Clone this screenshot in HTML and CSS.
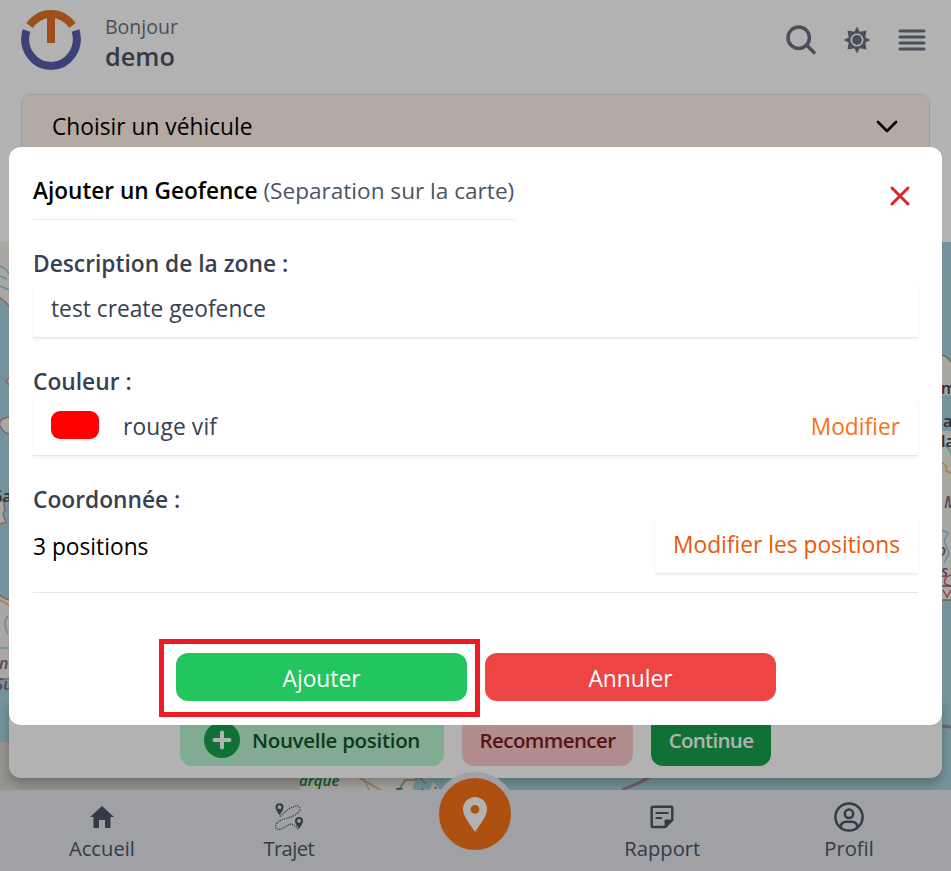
FILE: index.html
```html
<!DOCTYPE html>
<html lang="fr">
<head>
<meta charset="utf-8">
<title>Geofence</title>
<link rel="stylesheet" href="styles.css">
</head>
<body>
<div class="app">
  <header class="top">
    <svg class="logo" viewBox="0 0 60 60"><g fill="none" stroke-width="8"><path d="M8.500 15.500Q17 4 30 4T51.500 15.500" stroke="#e47224"/><path d="M5.500 20.500C0 39 13 56 30 56S60 39 54.500 20.500" stroke="#585da8"/></g><path d="M26 4h8v29h-8z" fill="#e47224"/></svg>
    <div class="hello"><span class="hi">Bonjour</span><span class="user">demo</span></div>
    <div class="tools">
      <svg width="32" height="32" viewBox="0 0 32 32" fill="none" stroke="#6b7280" stroke-width="3.500" stroke-linecap="round"><circle cx="12.700" cy="13.700" r="10.700"/><path d="M20.500 21l7.500 7.500"/></svg>
      <svg width="28" height="28" viewBox="0 0 28 28" fill="#6b7280"><path d="M14 .5l2.600 5.200 6.900-1.200-1.200 6.900L27.500 14l-5.200 2.600 1.200 6.900-6.900-1.200L14 27.500l-2.600-5.200-6.900 1.200 1.200-6.900L.5 14l5.200-2.600-1.200-6.900 6.900 1.200z"/><circle cx="14" cy="14" r="5.700" stroke="#fff" stroke-width="1.600"/></svg>
      <svg width="28" height="28" viewBox="0 0 28 28" stroke="#6b7280" stroke-width="3" stroke-linecap="round"><path d="M2 4.900h24M2 10.900h24M2 16.900h24M2 22.900h24"/></svg>
    </div>
  </header>
  <div class="select"><span>Choisir un véhicule</span><svg width="24" height="14" viewBox="0 0 24 14" fill="none" stroke="#000" stroke-width="2.600" stroke-linecap="round" stroke-linejoin="round"><path d="M3 2l9 9 9-9"/></svg></div>
  <main class="map">
    <svg class="tiles" width="951" height="548" viewBox="0 242 951 548">
      <path fill="#aad3df" d="M0 242h951v548H0z"/>
      <path fill="#f2efe9" d="M0 242h9v64l-9-9z"/><path fill="#d9d6d1" d="M0 742h300v48H0z"/><path fill="#f2efe9" d="M300 778h130l10 12H300z"/>
      <g fill="#f2efe9" stroke="#ad91ad" stroke-width="1.500"><path d="M-2 297q6 2 12 11M10 377l-4 4 4 5M10 417q-12 1-10 9 4 8 10 8M-2 498l5 2 2 10-2 4 3 8-8 3M-2 594l6 4 8 3v77l-14 2z"/><path d="M941 355q5 0 11 8v237h-11z" stroke="#8b9a72"/></g>
      <path fill="#aad3df" d="M942 395h9v36h-9z"/>
      <g fill="none" stroke-width="1.500"><path d="M0 266q6 2 9 8M0 276l7 3M0 286l9 4M8 616q-6 6 0 18M0 648h9M943 444q8 4 8 12M942 530l6 3-4 8 5 12-5 10" stroke="#8ccbe0"/><path d="M0 600l9 5M942 463q6 2 4 8l5 2" stroke="#f5b55c"/><path d="M951 575q-8 2-6 9l6 2M943 590l4 7 4-7" stroke="#e05575"/><path d="M942 586h9" stroke="#6b6b6b"/></g>
      <path d="M942 726l9 1M622 790q16-6 30-14" fill="none" stroke="#a58ba8" stroke-width="3"/>
      <path d="M358 777l24 14" stroke="#efb47a" fill="none" stroke-width="2"/><path d="M363 777l6 13" stroke="#8fbf8f" fill="none"/>
      <path d="M430 790l4-12h-18l-4 12z" fill="#aad3df"/><path d="M400 788l5-8h9l5-3 7 7" fill="none" stroke="#b39683" stroke-width="1.500"/>
      <g class="maptext"><text x="-9" y="502">Ga</text><text x="941" y="394">m</text><text x="943" y="427">a</text><text x="941" y="447">la</text></g>
      <g class="maptext place"><text x="-1" y="669">n</text><text x="-5" y="690">Su</text><text x="944" y="508">M</text><text x="937" y="556">o</text><text x="941" y="577">s</text></g>
      <g class="maptext park"><text x="299" y="786">arque</text><text x="394" y="798">Fontvie</text></g>
    </svg>
    <section class="panel"><span class="pill add"><svg width="36" height="36" viewBox="0 0 36 36"><circle cx="18" cy="18" r="18" fill="#16a34a"/><path d="M18 10.500v15M10.500 18h15" stroke="#fff" stroke-width="4" stroke-linecap="round"/></svg>Nouvelle position</span><span class="pill reset">Recommencer</span><span class="pill next">Continue</span></section>
  </main>
  <nav class="nav">
    <a><svg width="30" height="30" viewBox="0 0 30 30" fill="#4b5563"><path d="M15 4L3 15h3.500v11H12v-8h6v8h5.500V15H27z"/></svg><span>Accueil</span></a>
    <a><svg width="30" height="30" viewBox="0 0 30 30" fill="#4b5563"><path fill-rule="evenodd" d="M5.500 1.300a4 4 0 0 1 4 4q0 2.700-4 7.700-4-5-4-7.700a4 4 0 0 1 4-4zm0 2a1.900 1.900 0 1 0 0 3.800 1.900 1.900 0 1 0 0-3.800zM25 15a4 4 0 0 1 4 4q0 2.700-4 7.700-4-5-4-7.700a4 4 0 0 1 4-4zm0 2a1.900 1.900 0 1 0 0 3.800 1.900 1.900 0 1 0 0-3.800z"/><path fill="none" stroke="#4b5563" stroke-width="1.200" stroke-dasharray="1.300 1" d="M6 14.500C12 9 18 3.500 24 4c5 3 0 8-6 10.500S2 18 1.500 24.500c1 6 9 1 12-1s5-2 8 1l3 3.500"/></svg><span class="trajet">Trajet</span></a>
    <a class="home"><span class="orb"><svg width="24" height="35" viewBox="0 0 24 35"><path fill="#fff" fill-rule="evenodd" d="M12 0a12 12 0 0 1 12 12c0 7-6 14-12 23C6 26 0 19 0 12A12 12 0 0 1 12 0zm0 8a4.400 4.400 0 1 0 0 8.800A4.400 4.400 0 0 0 12 8z"/></svg></span></a>
    <a><svg width="30" height="30" viewBox="0 0 30 30" fill="none" stroke="#4b5563" stroke-width="2.400"><path d="M5.500 4.800h19a.8.8 0 0 1 .8.8V18l-7 7H5.500a.8.8 0 0 1-.8-.8V5.600a.8.8 0 0 1 .8-.8z"/><path d="M8.500 11h13M8.500 16h6.500" stroke-width="2.200"/><path d="M18 25v-7h7z" fill="#4b5563" stroke-width="1"/></svg><span>Rapport</span></a>
    <a><svg width="30" height="30" viewBox="0 0 30 30" fill="none" stroke="#4b5563" stroke-width="2.500"><circle cx="15" cy="15" r="13.600"/><circle cx="15" cy="11.800" r="4.200"/><path d="M6.300 25q1.200-5.300 6-5.300h5.400q4.800 0 6 5.300"/></svg><span>Profil</span></a>
  </nav>
</div>
<div class="overlay">
  <section class="modal">
    <div class="head"><h2><b>Ajouter un Geofence</b> <span class="sub">(Separation sur la carte)</span></h2><svg class="close" width="20" height="20" viewBox="0 0 20 20" stroke="#dc2626" stroke-width="3" stroke-linecap="round"><path d="M2 2l16 16M18 2L2 18"/></svg></div>
    <div class="field"><h3>Description de la zone :</h3><div class="row"><span>test create geofence</span></div></div>
    <div class="field"><h3>Couleur :</h3><div class="row"><i class="swatch"></i><span class="colour">rouge vif</span><span class="edit">Modifier</span></div></div>
    <div class="field last"><h3>Coordonnée :</h3><div class="coords"><span class="count">3 positions</span><div class="row"><span>Modifier les positions</span></div></div></div>
    <div class="actions"><div class="mark"><button class="btn ok">Ajouter</button></div><button class="btn no">Annuler</button></div>
  </section>
</div>
</body>
</html>
```
FILE: styles.css
```css
* { box-sizing: border-box; }
body { margin: 0; width: 951px; height: 871px; overflow: hidden; font: 22.75px/36px "Open Sans", "Noto Sans", sans-serif; color: #000; background: #fff; }
.app { height: 871px; display: flex; flex-direction: column; }
.top { height: 94px; display: flex; align-items: flex-start; padding: 10px 25px 0 21px; }
.logo { width: 60px; height: 60px; }
.hello { display: flex; flex-direction: column; margin-left: 24px; }
.hi { font-size: 19.5px; line-height: 30px; margin-top: 2px; color: #6b7280; }
.user { font-size: 25.3px; line-height: 28px; font-weight: 600; color: #4b5563; }
.tools { margin-left: auto; display: flex; align-items: center; height: 60px; }
.tools svg:nth-child(1) { margin-right: 24.5px; }
.tools svg:nth-child(2) { margin-right: 27.5px; }
.select { flex: none; height: 66px; margin: 0 21px; padding: 0 30px; border: 1px solid #e2e4e8; border-radius: 9px; background: #fff4ea; display: flex; align-items: center; justify-content: space-between; }
.map { margin-top: 82px; height: 548px; flex: none; display: grid; }
.tiles { grid-area: 1 / 1; }
.maptext { font: 600 16px "Open Sans", sans-serif; fill: #444; }
.place { font-style: italic; fill: #86628b; }
.park { font-size: 15px; font-style: italic; fill: #218533; }
.panel { grid-area: 1 / 1; align-self: end; margin: 0 9px 12px; height: 80px; border-radius: 0 0 12px 12px; background: #fff; box-shadow: 0 6px 12px rgba(0,0,0,.25); display: flex; justify-content: center; align-items: flex-end; gap: 18px; padding-bottom: 12px; }
.pill { height: 52px; border-radius: 12px; display: flex; align-items: center; justify-content: center; font-weight: 600; font-size: 20.5px; letter-spacing: -0.3px; white-space: nowrap; }
.add { width: 264px; gap: 12px; background: #bbf7d0; color: #14532d; }
.reset { width: 171px; background: #fecaca; color: #7f1d1d; letter-spacing: -0.6px; }
.next { width: 120px; background: #16a34a; color: #fff; letter-spacing: -0.7px; }
.nav { flex: none; height: 81px; padding: 0 8.5px; background: #e5e7eb; display: grid; grid-template-columns: repeat(5, 1fr); }
.nav a { display: flex; flex-direction: column; align-items: center; padding-top: 12px; font-size: 20.2px; line-height: 33px; color: #4b5563; }
.nav .trajet { letter-spacing: -0.6px; }
.nav .home { padding: 0; }
.orb { width: 84px; height: 84px; margin-top: -18px; border: 6px solid #e5e7eb; border-radius: 50%; background: #f97316; display: flex; align-items: center; justify-content: center; position: relative; }
.overlay { position: fixed; inset: 0; background: rgba(0,0,0,.3); padding: 147px 9px 0; }
.modal { height: 578px; border-radius: 12px; background: #fff; padding: 24px 24px 0; }
.head { display: flex; justify-content: space-between; align-items: flex-start; }
h2 { font-size: 22.6px; font-weight: 400; margin: 0; height: 49px; width: 482px; line-height: 40px; border-bottom: 1px solid #e5e7eb; white-space: nowrap; }
h2 b, h3 { font-weight: 600; }
.sub { color: #4b5563; }
.close { margin: 15px 8px 0 0; }
.field { margin-top: 24px; }
h3 { margin: 0; font-size: 22.75px; line-height: 40px; height: 36px; color: #374151; }
.row { height: 58px; padding: 0 18px; display: flex; align-items: center; border-bottom: 1px solid #e5e7eb; box-shadow: 0 1.5px 3px rgba(0,0,0,.06); color: #374151; white-space: nowrap; }
.swatch { width: 48px; height: 28px; border-radius: 9px; background: red; margin: -4px 24px 0 0; }
.colour { letter-spacing: 0.15px; }
.edit { margin-left: auto; color: #f97316; }
.coords { display: flex; justify-content: space-between; align-items: center; }
.coords .row { color: #ea580c; width: 263px; }
.count { padding-top: 4px; }
.last { height: 113px; border-bottom: 1px solid #e5e7eb; }
.actions { display: flex; align-items: flex-start; margin: 46px 0 0 126px; }
.mark { width: 321px; height: 78px; border: 5px solid #ed1c24; padding: 9px 0 0 12px; }
.btn { display: block; width: 291px; height: 48px; padding: 3px 0 0; border: 0; border-radius: 12px; color: #fff; font: inherit; }
.ok { background: #22c55e; }
.no { background: #ef4444; margin: 14px 0 0 5px; }
```
